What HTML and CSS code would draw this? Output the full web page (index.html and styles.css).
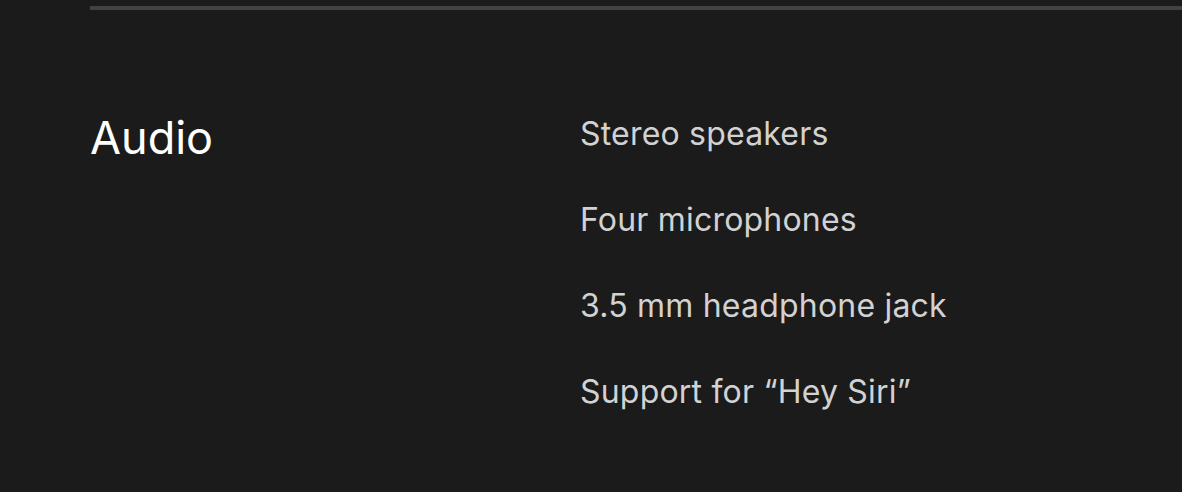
FILE: index.html
```html
<!DOCTYPE html>
<html lang="en">
<head>
<meta charset="utf-8">
<link rel="stylesheet" href="styles.css">
</head>
<body>
<main class="page">
  <section class="spec">
    <h2 class="spec-title">Audio</h2>
    <ul class="spec-list">
      <li>Stereo speakers</li>
      <li>Four microphones</li>
      <li>3.5 mm headphone jack</li>
      <li>Support for “Hey Siri”</li>
    </ul>
  </section>
</main>
</body>
</html>
```
FILE: styles.css
```css
html, body {
  margin: 0;
  padding: 0;
  background: #1b1b1b;
}
body {
  font-family: Inter, "Noto Sans", sans-serif;
  -webkit-font-smoothing: antialiased;
}
.page {
  padding: 6px 0 0 90px;
}
.spec {
  display: flex;
  border-top: 4px solid #424242;
  padding-top: 105px;
}
.spec-title {
  margin: 0;
  width: 490px;
  flex: none;
  font-size: 45px;
  font-weight: 400;
  line-height: 45px;
  color: #ffffff;
}
.spec-list {
  list-style: none;
  margin: -24px 0 0;
  padding: 0;
  color: #d2d2d2;
  font-size: 32px;
  line-height: 86px;
  letter-spacing: 0.2px;
}
```
